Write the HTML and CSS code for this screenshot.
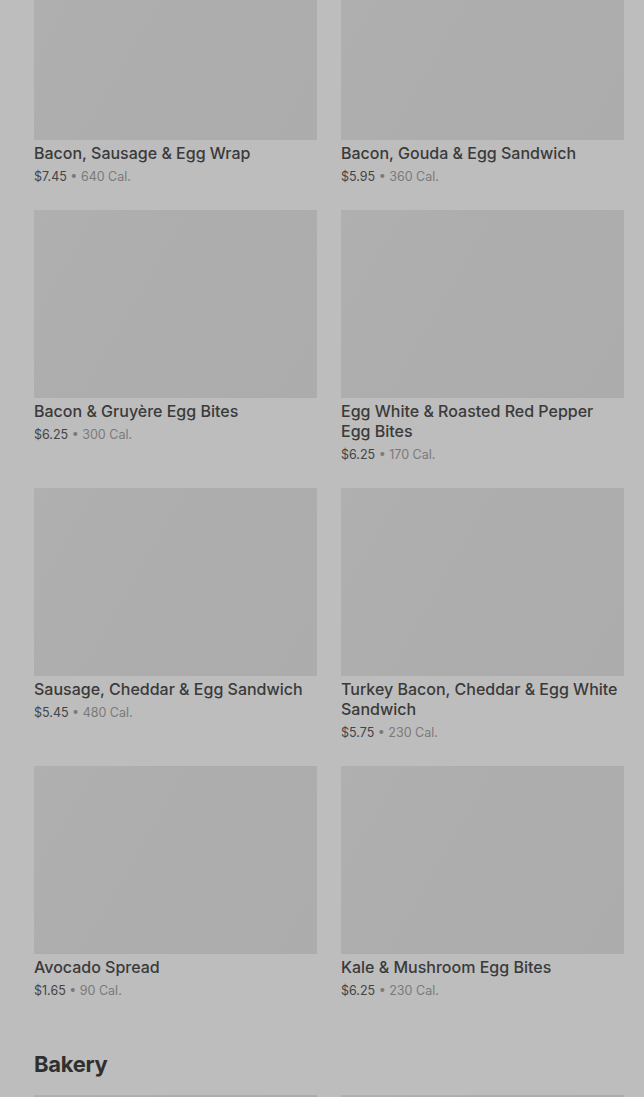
FILE: index.html
```html
<!DOCTYPE html>
<html lang="en">
<head>
  <meta charset="UTF-8">
  <meta name="viewport" content="width=device-width, initial-scale=1.0">
  <title>Breakfast Menu</title>
  <link rel="stylesheet" href="styles.css">
</head>
<body>
  <main class="menu">
    <!-- Hot breakfast section (scrolled) -->
    <section class="section">
      <div class="grid">
        <div class="item">
          <div class="thumb"></div>
          <div class="name">Bacon, Sausage &amp; Egg Wrap</div>
          <div class="meta"><span class="price">$7.45</span> • 640 Cal.</div>
        </div>
        <div class="item">
          <div class="thumb"></div>
          <div class="name">Bacon, Gouda &amp; Egg Sandwich</div>
          <div class="meta"><span class="price">$5.95</span> • 360 Cal.</div>
        </div>
        <div class="item">
          <div class="thumb"></div>
          <div class="name">Bacon &amp; Gruyère Egg Bites</div>
          <div class="meta"><span class="price">$6.25</span> • 300 Cal.</div>
        </div>
        <div class="item">
          <div class="thumb"></div>
          <div class="name">Egg White &amp; Roasted Red Pepper Egg Bites</div>
          <div class="meta"><span class="price">$6.25</span> • 170 Cal.</div>
        </div>
        <div class="item">
          <div class="thumb"></div>
          <div class="name">Sausage, Cheddar &amp; Egg Sandwich</div>
          <div class="meta"><span class="price">$5.45</span> • 480 Cal.</div>
        </div>
        <div class="item">
          <div class="thumb"></div>
          <div class="name">Turkey Bacon, Cheddar &amp; Egg White Sandwich</div>
          <div class="meta"><span class="price">$5.75</span> • 230 Cal.</div>
        </div>
        <div class="item">
          <div class="thumb"></div>
          <div class="name">Avocado Spread</div>
          <div class="meta"><span class="price">$1.65</span> • 90 Cal.</div>
        </div>
        <div class="item">
          <div class="thumb"></div>
          <div class="name">Kale &amp; Mushroom Egg Bites</div>
          <div class="meta"><span class="price">$6.25</span> • 230 Cal.</div>
        </div>
      </div>
    </section>

    <section class="section">
      <h2 class="section-title">Bakery</h2>
      <div class="grid">
        <div class="item">
          <div class="thumb"></div>
        </div>
        <div class="item">
          <div class="thumb"></div>
        </div>
      </div>
    </section>
  </main>
</body>
</html>
```

FILE: styles.css
```css
body {
  margin: 0;
  font-family: Inter, Roboto, sans-serif;
  background-color: #bdbdbd;
  color: #3b3b3b;
  overflow: hidden;
}

.menu {
  padding: 0 20px 0 34px;
  margin-top: -48px;
}

.grid {
  display: grid;
  grid-template-columns: 283px 283px;
  column-gap: 24px;
  row-gap: 23px;
}

.thumb {
  height: 188px;
  background: linear-gradient(120deg, #b0b0b0 0%, #adadad 40%, #acacac 100%);
}

.name {
  margin-top: 3px;
  font-size: 16px;
  line-height: 20px;
  font-weight: 500;
  color: #3a3a3a;
}

.meta {
  margin-top: 4px;
  font-size: 12.5px;
  line-height: 20px;
  color: #7a7a7a;
}

.price {
  color: #444444;
}

.section-title {
  margin: 49px 0 17px;
  font-size: 22px;
  line-height: 28px;
  font-weight: 700;
  color: #2f2f2f;
  letter-spacing: -0.3px;
}
```
